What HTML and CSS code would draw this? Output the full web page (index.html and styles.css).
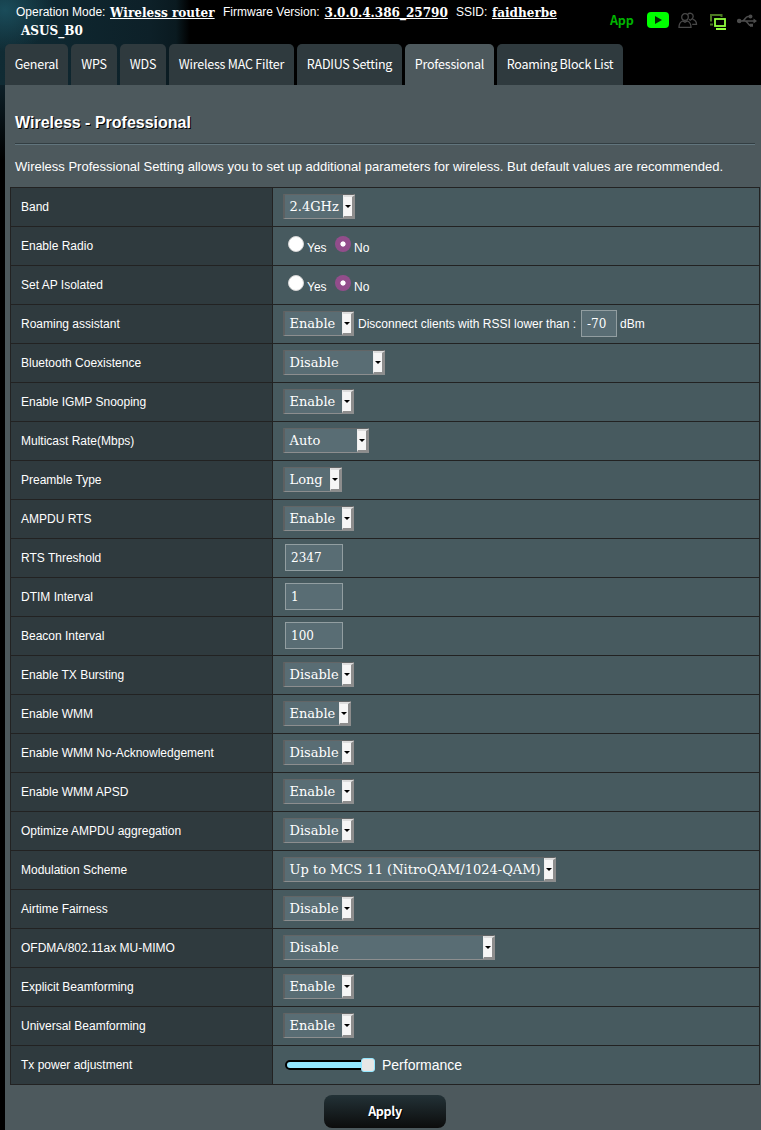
FILE: index.html
```html
<!DOCTYPE html>
<html lang="en">
<head>
<meta charset="utf-8">
<title>Wireless - Professional</title>
<link rel="stylesheet" href="styles.css">
</head>
<body>
<header class="top">
  <div class="info">
    <div class="line"><span class="key k1">Operation Mode:</span><a class="val v1">Wireless router</a><span class="key k2">Firmware Version:</span><a class="val v2">3.0.0.4.386_25790</a><span class="key k3">SSID:</span><a class="val v3">faidherbe</a></div>
    <div class="ssid">ASUS_B0</div>
  </div>
  <div class="status">
    <span class="app">App</span>
    <svg class="play" width="22" height="16" viewBox="0 0 22 16"><rect width="22" height="16" rx="4" fill="#0f0"/><path d="M8 4l7 4-7 4z" fill="#052505"/></svg>
    <svg class="users" width="20" height="17" viewBox="0 0 20 17" fill="none" stroke="#484848" stroke-width="1.3"><circle cx="7" cy="5" r="3.300"/><path d="M1 15.300c0-3.300 1.300-5.300 3.700-6.300l2.300 1.200L9.300 9c2.400 1 3.700 3 3.700 6.300z"/><path d="M9.800 2.300c1.400-1.800 5.400-1.300 5.400 2 0 1.700-.8 2.900-2.200 3.400M14.800 7.300c2.500.7 3.700 2.400 3.700 5h-4.300M11 7.300l2 1"/></svg>
    <svg class="screens" width="18" height="18" viewBox="0 0 18 18" fill="none"><path d="M2 8.500V2h10.500v2" stroke="#4c7a22" stroke-width="2"/><path d="M1 11.500h3" stroke="#4c7a22" stroke-width="2"/><rect x="6" y="6" width="10" height="7" stroke="#8fff3c" stroke-width="1.800"/><path d="M7 16h10" stroke="#8fff3c" stroke-width="2"/></svg>
    <svg class="usb" width="20" height="14" viewBox="0 0 20 14" fill="none" stroke="#4c4c4c" stroke-width="1.600"><path d="M2 7h16M5 7c3 0 3-4.500 6-4.500h2M8 7c3 0 2.500 4.500 6 4.500"/><circle cx="2.200" cy="7" r="1.500" fill="#4c4c4c"/><circle cx="13.500" cy="2.500" r="1.200" fill="#4c4c4c"/><path d="M13 9.800h3v3h-3zM16.500 4.500l3.500 2.500-3.500 2.500z" fill="#4c4c4c" stroke="none"/></svg>
  </div>
</header>
<nav class="tabs">
  <a class="tab t1"><span>General</span></a><a class="tab t2"><span>WPS</span></a><a class="tab t3"><span>WDS</span></a><a class="tab t4"><span>Wireless MAC Filter</span></a><a class="tab t5"><span>RADIUS Setting</span></a><a class="tab t6 active"><span>Professional</span></a><a class="tab t7"><span>Roaming Block List</span></a>
</nav>
<main class="panel">
  <h1 class="title">Wireless - Professional</h1>
  <div class="rule"></div>
  <p class="desc">Wireless Professional Setting allows you to set up additional parameters for wireless. But default values are recommended.</p>
  <div class="table">
    <div class="row"><div class="label">Band</div><div class="cell"><span class="select w72">2.4GHz<i class="arrow"></i></span></div></div>
    <div class="row"><div class="label">Enable Radio</div><div class="cell radios"><i class="radio"></i><span class="opt">Yes</span><i class="radio on"></i><span class="opt">No</span></div></div>
    <div class="row"><div class="label">Set AP Isolated</div><div class="cell radios"><i class="radio"></i><span class="opt">Yes</span><i class="radio on"></i><span class="opt">No</span></div></div>
    <div class="row"><div class="label">Roaming assistant</div><div class="cell"><span class="select w71">Enable<i class="arrow"></i></span><span class="note">Disconnect clients with RSSI lower than :</span><span class="input short">-70</span><span class="unit">dBm</span></div></div>
    <div class="row"><div class="label">Bluetooth Coexistence</div><div class="cell"><span class="select w102">Disable<i class="arrow"></i></span></div></div>
    <div class="row"><div class="label">Enable IGMP Snooping</div><div class="cell"><span class="select w71">Enable<i class="arrow"></i></span></div></div>
    <div class="row"><div class="label">Multicast Rate(Mbps)</div><div class="cell"><span class="select w86">Auto<i class="arrow"></i></span></div></div>
    <div class="row"><div class="label">Preamble Type</div><div class="cell"><span class="select w59">Long<i class="arrow"></i></span></div></div>
    <div class="row"><div class="label">AMPDU RTS</div><div class="cell"><span class="select w71">Enable<i class="arrow"></i></span></div></div>
    <div class="row"><div class="label">RTS Threshold</div><div class="cell"><span class="input">2347</span></div></div>
    <div class="row"><div class="label">DTIM Interval</div><div class="cell"><span class="input">1</span></div></div>
    <div class="row"><div class="label">Beacon Interval</div><div class="cell"><span class="input">100</span></div></div>
    <div class="row"><div class="label">Enable TX Bursting</div><div class="cell"><span class="select w71">Disable<i class="arrow"></i></span></div></div>
    <div class="row"><div class="label">Enable WMM</div><div class="cell"><span class="select w68">Enable<i class="arrow"></i></span></div></div>
    <div class="row"><div class="label">Enable WMM No-Acknowledgement</div><div class="cell"><span class="select w71">Disable<i class="arrow"></i></span></div></div>
    <div class="row"><div class="label">Enable WMM APSD</div><div class="cell"><span class="select w71">Enable<i class="arrow"></i></span></div></div>
    <div class="row"><div class="label">Optimize AMPDU aggregation</div><div class="cell"><span class="select w71">Disable<i class="arrow"></i></span></div></div>
    <div class="row"><div class="label">Modulation Scheme</div><div class="cell"><span class="select w273">Up to MCS 11 (NitroQAM/1024-QAM)<i class="arrow"></i></span></div></div>
    <div class="row"><div class="label">Airtime Fairness</div><div class="cell"><span class="select w71">Disable<i class="arrow"></i></span></div></div>
    <div class="row"><div class="label">OFDMA/802.11ax MU-MIMO</div><div class="cell"><span class="select w212">Disable<i class="arrow"></i></span></div></div>
    <div class="row"><div class="label">Explicit Beamforming</div><div class="cell"><span class="select w71">Enable<i class="arrow"></i></span></div></div>
    <div class="row"><div class="label">Universal Beamforming</div><div class="cell"><span class="select w71">Enable<i class="arrow"></i></span></div></div>
    <div class="row"><div class="label">Tx power adjustment</div><div class="cell"><span class="slider"><i class="knob"></i></span><span class="power">Performance</span></div></div>
  </div>
  <button class="apply">Apply</button>
</main>
</body>
</html>
```
FILE: styles.css
```css
* { box-sizing: border-box; }
body {
  margin: 0;
  height: 1130px;
  overflow: hidden;
  color: #fff;
  font-family: "Liberation Sans", Arial, sans-serif;
  font-size: 12px;
  background:
    radial-gradient(ellipse 50px 42px at 5px 10px, #1a4c5a 0%, rgba(26, 76, 90, 0) 100%),
    linear-gradient(90deg, #102b34 0, #0d2028 150px, #0a1a20 176px, rgba(0, 0, 0, 0) 190px) 0 0 / 100% 85px no-repeat,
    linear-gradient(#0d2028 0, #000 75px) 0 85px / 5px 75px no-repeat,
    #000;
}
.top { display: flex; justify-content: space-between; height: 44px; }
.info { padding: 3px 0 0 16px; }
.line { display: flex; height: 18px; line-height: 18px; white-space: nowrap; }
.k1 { width: 94px; }
.v1 { width: 113px; }
.k2 { width: 101.5px; }
.v2 { width: 131.5px; }
.k3 { width: 36px; }
.val, .ssid { font-family: "DejaVu Serif Condensed", "DejaVu Serif", serif; font-stretch: condensed; font-weight: bold; font-size: 13.4px; }
.val { text-decoration: underline; }
.ssid { padding-left: 5px; line-height: 19px; }
.status { display: flex; align-items: flex-start; padding-right: 4px; }
.app { width: 37px; margin-top: 10px; font: bold 12.5px/20px "Noto Sans CJK SC", sans-serif; letter-spacing: -0.2px; color: #00b400; }
.play { margin: 12px 9px 0 0; }
.users { margin: 12px 11px 0 0; }
.screens { margin: 13px 10px 0 0; }
.usb { margin: 14px 0 0; }
.tabs { display: flex; gap: 3px; padding-left: 5px; height: 41px; }
.tab {
  display: flex; align-items: center; justify-content: center;
  padding-bottom: 2px;
  background: #2f3a3e; border-radius: 5px 5px 0 0;
  font: 12.5px/20px "Noto Sans CJK SC", sans-serif;
  letter-spacing: -0.22px;
  white-space: nowrap;
}
.tab.active { background: #4d595d; }
.t1 { width: 63px; }
.t2, .t3 { width: 46px; }
.t4 { width: 125px; }
.t5 { width: 105px; }
.t6 { width: 89px; }
.t7 { width: 126px; }
.panel { margin-left: 5px; height: 1045px; padding: 28px 1px 0 5px; background: #4d595d; }
.title { margin: 0 0 0 5px; font-size: 16px; line-height: 20px; text-shadow: 1px 1px 0 #000; }
.rule { margin: 10px 5px 0; height: 2px; border-top: 1px solid #333e42; background: #62757d; }
.desc { margin: 13px 0 0 5px; font-size: 13px; line-height: 18px; white-space: nowrap; }
.table { width: 750px; margin-top: 11px; border: 1px solid #222; border-bottom: 0; }
.row { display: flex; height: 39px; border-bottom: 1px solid #222; }
.label { width: 262px; padding: 1px 0 0 10px; line-height: 37px; background: #2f3a3e; border-right: 1px solid #222; }
.cell { flex: 1; display: flex; align-items: center; padding-left: 10px; background: #475a5f; }
.select {
  position: relative; height: 25px; margin-bottom: 1px; padding-left: 4.5px;
  border: 2px solid; border-color: #626566 #8c8e8f #8c8e8f #5d6061; border-width: 1px 2px 1px 2px;
  background: #596d74;
  font: 13px/23px "DejaVu Serif", serif; white-space: nowrap;
}
.arrow {
  position: absolute; right: -2px; top: 0; width: 12px; height: 23px;
  border: 2px solid; border-color: #ddd #8d8d8d #8d8d8d #efefef; border-width: 2px 3px 2px 1px;
  background: #f6f6f6;
}
.arrow::after { content: ""; position: absolute; left: 1px; top: 8px; border: 3px solid transparent; border-top-color: #000; border-bottom: 0; }
.w59 { width: 59px; }
.w68 { width: 68px; }
.w71 { width: 71px; }
.w72 { width: 72px; }
.w86 { width: 86px; }
.w102 { width: 102px; }
.w212 { width: 212px; }
.w273 { width: 273px; }
.input {
  width: 58px; height: 27px; margin: 0 0 1px 2px; padding-left: 5px;
  border: 1px solid #929ea1; background: #596d74;
  font: 13.33px/25px "DejaVu Serif Condensed", "DejaVu Serif", serif; font-stretch: condensed;
}
.short { width: 36px; margin: 0 3px 1px 0; }
.note { width: 223px; margin-left: 4px; white-space: nowrap; }
.radios { padding-left: 15px; }
.radio { width: 16px; height: 16px; margin: -4px 3px 0 0; border-radius: 50%; background: #fff; border: 1px solid #d5d5d5; }
.radio.on { border: 0; background: radial-gradient(circle, #fff 2.2px, #924d8b 3px); }
.opt { width: 28px; margin-top: 4px; }
.slider { position: relative; width: 90px; height: 10px; margin-left: 2px; border: 2px solid #000; border-radius: 5px; background: #93e7ff; }
.knob { position: absolute; right: -2px; top: -4px; width: 14px; height: 14px; border: 1px solid #93e7ff; border-radius: 3px; background: #e6e6e6; }
.power { margin-left: 7px; font-size: 14px; }
.apply {
  display: block; width: 122px; height: 33px; margin: 10px 0 0 314px; padding: 0 0 2px;
  border: 0; border-radius: 8px; color: #fff;
  background: linear-gradient(#233237, #0c0c0c);
  font: bold 12.5px/31px "Noto Sans CJK SC", sans-serif; letter-spacing: -0.3px; text-shadow: 1px 1px 0 #000;
}
```
